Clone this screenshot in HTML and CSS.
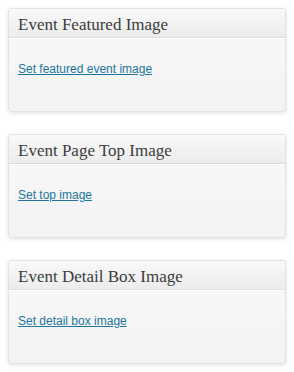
FILE: index.html
```html
<!DOCTYPE html>
<html lang="en">
<head>
    <meta charset="UTF-8">
    <title>Event Images</title>
    <link rel="stylesheet" href="styles.css">
</head>
<body>
    <div class="boxes">
        <div class="postbox">
            <h3 class="hndle">Event Featured Image</h3>
            <div class="inside">
                <a href="#">Set featured event image</a>
            </div>
        </div>

        <div class="postbox">
            <h3 class="hndle">Event Page Top Image</h3>
            <div class="inside">
                <a href="#">Set top image</a>
            </div>
        </div>

        <div class="postbox">
            <h3 class="hndle">Event Detail Box Image</h3>
            <div class="inside">
                <a href="#">Set detail box image</a>
            </div>
        </div>
    </div>
</body>
</html>
```

FILE: styles.css
```css
* {
    margin: 0;
    padding: 0;
    box-sizing: border-box;
}

body {
    background: #fff;
    font-family: "Liberation Sans", Arial, sans-serif;
}

.boxes {
    display: flex;
    flex-direction: column;
    gap: 22px;
    padding: 8px;
}

.postbox {
    height: 104px;
    background: linear-gradient(to bottom, #f9f9f9, #f3f3f3);
    border: 1px solid #e2e2e2;
    border-radius: 3px;
    box-shadow: 0 1px 4px rgba(0, 0, 0, 0.12);
    overflow: hidden;
}

.hndle {
    height: 29px;
    padding: 6px 9px 0;
    font-family: "Liberation Serif", "Times New Roman", serif;
    font-weight: normal;
    font-size: 17px;
    color: #3c3c3c;
    background: linear-gradient(to bottom, #f9f9f9, #ececec);
    border-bottom: 1px solid #dcdcdc;
    box-shadow: 0 1px 0 #fff;
}

.inside {
    padding: 24px 9px 0;
    font-size: 12px;
}

.inside a {
    color: #21759b;
    text-decoration: underline;
}
```
